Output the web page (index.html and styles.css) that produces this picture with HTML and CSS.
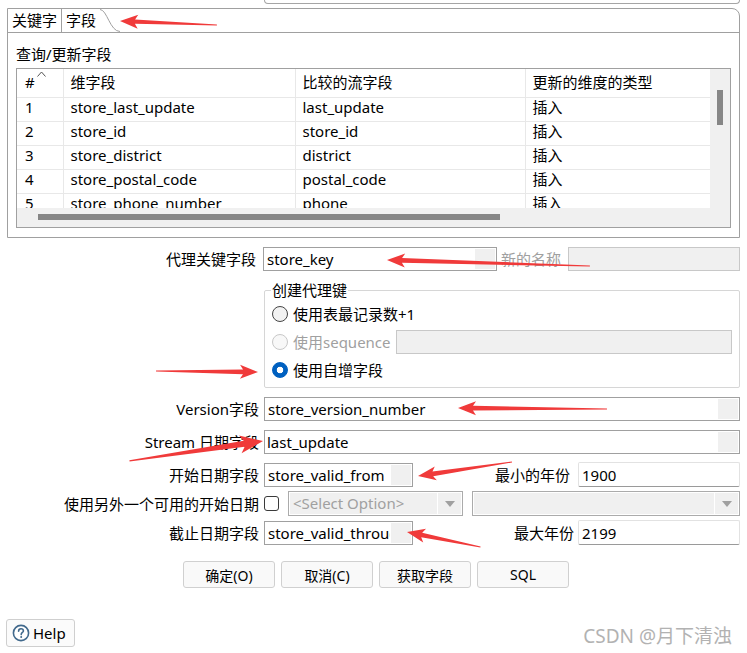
FILE: index.html
```html
<!DOCTYPE html>
<html>
<head>
  <meta charset="utf-8">
  <title>维度查询/更新</title>
  <link rel="stylesheet" href="styles.css">
</head>
<body>
  <div class="stub"></div>

  <div class="tab-folder">
    <div class="tab-strip">
      <div class="tab">关键字</div>
      <div class="tab tab-active">字段</div>
      <svg class="tab-curve" width="20" height="23" viewBox="0 0 20 23">
        <path d="M0 0.5 C7 0.5 10 22.5 20 22.5" fill="none" stroke="#a0a0a0"/>
      </svg>
    </div>
    <div class="tab-body">
      <div class="caption">查询/更新字段</div>
      <div class="grid-box">
        <div class="grid-main">
          <div class="grid-clip">
            <table class="grid">
              <colgroup>
                <col style="width: 46px">
                <col style="width: 232px">
                <col style="width: 230px">
                <col style="width: 185px">
              </colgroup>
              <thead>
                <tr>
                  <th class="num">#<svg class="sort" width="9" height="6" viewBox="0 0 9 6"><polyline points="0.5,5.5 4.5,1 8.5,5.5" fill="none" stroke="#555"/></svg></th>
                  <th>维字段</th>
                  <th>比较的流字段</th>
                  <th>更新的维度的类型</th>
                </tr>
              </thead>
              <tbody>
                <tr><td class="num">1</td><td>store_last_update</td><td>last_update</td><td>插入</td></tr>
                <tr><td class="num">2</td><td>store_id</td><td>store_id</td><td>插入</td></tr>
                <tr><td class="num">3</td><td>store_district</td><td>district</td><td>插入</td></tr>
                <tr><td class="num">4</td><td>store_postal_code</td><td>postal_code</td><td>插入</td></tr>
                <tr><td class="num">5</td><td>store_phone_number</td><td>phone</td><td>插入</td></tr>
              </tbody>
            </table>
          </div>
          <div class="vscroll"><div class="vthumb"></div></div>
        </div>
        <div class="hscroll"><div class="hthumb"></div></div>
      </div>
    </div>
  </div>

  <div class="form">
    <div class="row row-key">
      <div class="label">代理关键字段</div>
      <div class="field w-key"><span class="value">store_key</span><span class="var"></span></div>
      <div class="dim-label">新的名称</div>
      <div class="field off grow w-newname"></div>
    </div>

    <fieldset class="group">
      <legend>创建代理键</legend>
      <div class="option">
        <span class="radio"></span><span>使用表最记录数+1</span>
      </div>
      <div class="option disabled">
        <span class="radio"></span><span>使用sequence</span>
        <div class="field off grow"></div>
      </div>
      <div class="option">
        <span class="radio checked"></span><span>使用自增字段</span>
      </div>
    </fieldset>

    <div class="row gap-9">
      <div class="label">Version字段</div>
      <div class="field grow"><span class="value">store_version_number</span><span class="var"></span></div>
    </div>

    <div class="row gap-9">
      <div class="label">Stream 日期字段</div>
      <div class="field grow"><span class="value tight">last_update</span><span class="var"></span></div>
    </div>

    <div class="row gap-9">
      <div class="label">开始日期字段</div>
      <div class="field w-date"><span class="value">store_valid_from</span><span class="var"></span></div>
      <div class="year-label">最小的年份</div>
      <div class="year">1900</div>
    </div>

    <div class="row gap-4">
      <div class="label">使用另外一个可用的开始日期</div>
      <span class="check"></span>
      <div class="select w-select">
        <span class="select-text">&lt;Select Option&gt;</span>
        <span class="select-btn"><svg width="10" height="6" viewBox="0 0 10 6"><polygon points="0,0 10,0 5,6" fill="#a0a0a0"/></svg></span>
      </div>
      <div class="select grow">
        <span class="select-text"></span>
        <span class="select-btn"><svg width="10" height="6" viewBox="0 0 10 6"><polygon points="0,0 10,0 5,6" fill="#a0a0a0"/></svg></span>
      </div>
    </div>

    <div class="row gap-4">
      <div class="label">截止日期字段</div>
      <div class="field w-date"><span class="value">store_valid_through</span><span class="var"></span></div>
      <div class="year-label narrow">最大年份</div>
      <div class="year">2199</div>
    </div>

    <div class="buttons">
      <button class="btn">确定(O)</button>
      <button class="btn">取消(C)</button>
      <button class="btn">获取字段</button>
      <button class="btn">SQL</button>
    </div>

    <button class="help">
      <svg width="18" height="18" viewBox="0 0 18 18">
        <circle cx="9" cy="9" r="7.6" fill="#fff" stroke="#41698c" stroke-width="1.6"/>
        <path d="M6.6 7.2 C6.6 5.6 7.7 4.8 9 4.8 C10.4 4.8 11.4 5.7 11.4 6.9 C11.4 8.4 9.2 8.6 9.2 10.6" fill="none" stroke="#41698c" stroke-width="1.6" stroke-linecap="round"/>
        <circle cx="9.2" cy="13.1" r="1" fill="#41698c"/>
      </svg>
      <span>Help</span>
    </button>
  </div>

  <div class="watermark">CSDN @月下清浊</div>

  <!-- red call-out arrows over the dialog -->
  <svg class="marks" width="747" height="653" viewBox="0 0 747 653">
    <g fill="#f03a3a">
      <polygon transform="translate(120 21) rotate(2.4)" points="0,0 18,-7 15,-2.2 97,-0.5 97,0.5 15,2.2 18,7"/>
      <polygon transform="translate(387 260) rotate(1.7)" points="0,0 18,-7 15,-2.4 203,-0.5 203,0.5 15,2.4 18,7"/>
      <polygon transform="translate(258 372) rotate(180.6)" points="0,0 18,-7 15,-2.4 102,-0.5 102,0.5 15,2.4 18,7"/>
      <polygon transform="translate(458 408) rotate(0.4)" points="0,0 18,-7 15,-2.4 149,-0.5 149,0.5 15,2.4 18,7"/>
      <polygon transform="translate(263 441) rotate(171.5)" points="0,0 23,-9 19,-3 135,-0.6 135,0.6 19,3 23,9"/>
      <polygon transform="translate(418 476) rotate(-8.5)" points="0,0 18,-7 15,-2.4 95,-0.5 95,0.5 15,2.4 18,7"/>
      <polygon transform="translate(407 532) rotate(11.6)" points="0,0 18,-7 15,-2.4 75,-0.5 75,0.5 15,2.4 18,7"/>
    </g>
  </svg>
</body>
</html>
```

FILE: styles.css
```css
:root {
  --line: #a0a0a0;
  --soft: #f0f0f0;
  --grid-line: #e8e8e8;
  --muted: #a0a0a0;
  --thumb: #868686;
  --font: "Noto Sans", "Noto Sans CJK SC", sans-serif;
}
* {
  box-sizing: border-box;
}
body {
  margin: 0;
  width: 747px;
  height: 653px;
  overflow: hidden;
  position: relative;
  background: #fff;
  color: #000;
  font-family: var(--font);
  font-size: 15px;
  line-height: 20px;
}

/* leftover of the field above the folder */
.stub {
  margin-left: 264px;
  width: 476px;
  height: 4px;
  border: 1px solid #a5a5a5;
  border-top: 0;
  border-radius: 0 0 4px 4px;
}

/* tab folder */
.tab-folder {
  margin: 4px 0 0 7px;
  width: 733px;
  height: 230px;
  border: 1px solid var(--line);
  border-radius: 0 8px 0 0;
}
.tab-strip {
  display: flex;
  height: 24px;
  border-bottom: 1px solid var(--line);
}
.tab {
  padding: 0 4px;
  line-height: 23px;
  border-right: 1px solid var(--line);
}
.tab-active {
  border-right: 0;
}
.tab-curve {
  display: block;
}
.tab-body {
  padding: 11px 8px 0 8px;
}
.caption {
  line-height: 20px;
}

/* field grid */
.grid-box {
  margin-top: 4px;
  height: 160px;
  border: 1px solid var(--line);
  display: flex;
  flex-direction: column;
}
.grid-main {
  display: flex;
  height: 139px;
}
.grid-clip {
  flex: 1;
  overflow: hidden;
}
.grid {
  table-layout: fixed;
  border-collapse: collapse;
  width: 693px;
}
.grid th,
.grid td {
  padding: 0 7px;
  text-align: left;
  vertical-align: top;
  font-weight: normal;
  white-space: nowrap;
  overflow: hidden;
  border-right: 1px solid var(--grid-line);
}
.grid th {
  height: 28px;
  line-height: 26px;
  position: relative;
}
.grid td {
  height: 24px;
  line-height: 19px;
  border-top: 1px solid var(--grid-line);
}
.grid .num {
  padding-left: 8px;
}
.sort {
  position: absolute;
  left: 20px;
  top: 2px;
}
.vscroll {
  width: 20px;
  background: var(--soft);
}
.vthumb {
  margin: 21px 0 0 7px;
  width: 6px;
  height: 35px;
  background: var(--thumb);
}
.hscroll {
  flex: 1;
  background: var(--soft);
  padding: 6px 0 0 21px;
}
.hthumb {
  width: 462px;
  height: 6px;
  background: var(--thumb);
}

/* form */
.form {
  width: 740px;
  padding-top: 8px;
}
.row {
  display: flex;
  align-items: center;
  height: 25px;
}
.gap-9 {
  margin-top: 8px;
}
.gap-4 {
  margin-top: 4px;
}
.label {
  width: 259px;
  margin-right: 5px;
  text-align: right;
  white-space: nowrap;
}
.row-key .label {
  width: 256px;
  margin-right: 7px;
}
.field {
  height: 24px;
  border: 1px solid var(--line);
  background: #fff;
  display: flex;
}
.field .value {
  flex: 1;
  padding-left: 3px;
  line-height: 22px;
  white-space: nowrap;
  overflow: hidden;
}
.field .value.tight {
  padding-left: 2px;
}
.field .var {
  width: 20px;
  margin: 1px;
  background: var(--soft);
}
.field.off {
  background: var(--soft);
  border-color: #c8c8c8;
}
.w-key {
  width: 234px;
}
.w-newname {
  margin-left: 7px;
}
.w-date {
  width: 149px;
}
.grow {
  flex: 1;
}
.dim-label {
  margin-left: 4px;
  color: var(--muted);
}

/* surrogate key group */
.group {
  margin: 9px 0 0 264px;
  width: 476px;
  padding: 0 7px 3px 7px;
  border: 1px solid #d6d6d6;
  border-radius: 2px;
}
.group legend {
  padding: 0 1px;
  margin-left: -1px;
  line-height: 20px;
}
.option {
  display: flex;
  align-items: center;
  height: 28px;
}
.option .field {
  margin-left: 5px;
}
.option.disabled {
  color: var(--muted);
}
.radio {
  width: 16px;
  height: 16px;
  margin-right: 5px;
  border: 1px solid #444;
  border-radius: 50%;
  background: #f2f2f2;
}
.option.disabled .radio {
  border-color: #c8c8c8;
  background: #f8f8f8;
}
.radio.checked {
  border-color: #0060c0;
  background: radial-gradient(circle, #fff 0 3px, #0060c0 3.6px);
}

/* year boxes */
.year-label {
  flex: 1;
  text-align: right;
  margin-right: 8px;
}
.year-label.narrow {
  margin-right: 4px;
}
.year {
  width: 162px;
  height: 25px;
  padding-left: 3px;
  line-height: 24px;
  border: 1px solid #e2e2e2;
  border-bottom-color: #9a9a9a;
  border-radius: 2px;
}

/* checkbox and drop-downs */
.check {
  width: 15px;
  height: 15px;
  border: 1px solid #3a3a3a;
  border-radius: 3px;
  background: #fff;
}
.select {
  height: 25px;
  border: 1px solid #ababab;
  background: var(--soft);
  box-shadow: inset 0 0 0 1px #fff;
  display: flex;
}
.w-select {
  width: 175px;
  margin-left: 9px;
}
.select.grow {
  margin-left: 9px;
}
.select-text {
  flex: 1;
  padding-left: 4px;
  line-height: 23px;
  color: var(--muted);
  white-space: nowrap;
  overflow: hidden;
}
.select-btn {
  width: 24px;
  margin: 1px 1px 1px 0;
  border-left: 1px solid #fff;
  display: flex;
  align-items: center;
  justify-content: center;
}

/* buttons */
.buttons {
  display: flex;
  gap: 6px;
  margin-top: 16px;
  padding-left: 183px;
}
.btn {
  width: 92px;
  height: 27px;
  border: 1px solid #d0d0d0;
  border-radius: 3px;
  background: #f9f9f9;
  font-family: var(--font);
  font-size: 14px;
  color: #000;
  padding: 0;
}
.help {
  display: flex;
  align-items: center;
  gap: 3px;
  margin: 31px 0 0 6px;
  width: 69px;
  height: 28px;
  padding: 0 0 0 5px;
  border: 1px solid #cfcfcf;
  border-radius: 3px;
  background: #fbfbfb;
  font-family: var(--font);
  font-size: 15px;
  color: #000;
}

.watermark {
  position: absolute;
  right: 15px;
  bottom: 7px;
  font-size: 19px;
  color: #b2b2b2;
}
.marks {
  position: absolute;
  top: 0;
  left: 0;
  pointer-events: none;
}
```
